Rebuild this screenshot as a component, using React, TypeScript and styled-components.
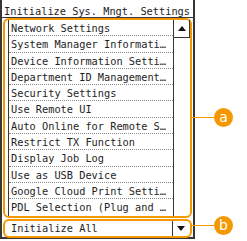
import { FC } from 'react';
import styled, { createGlobalStyle } from 'styled-components';

const ORANGE = '#f39800';
const DARK = '#363636';

const GlobalStyle = createGlobalStyle`
    html, body {
        margin: 0;
        padding: 0;
        background: #ffffff;
    }
`;

const Page = styled.div`
    position: relative;
    width: 247px;
    height: 241px;
    background: #ffffff;
    font-family: 'DejaVu Sans Mono', 'Liberation Mono', monospace;
    font-size: 10.3px;
    color: #1e1e1e;
`;

const Screen = styled.div`
    box-sizing: border-box;
    width: 195px;
    height: 239px;
    border: 2px solid ${DARK};
    border-top: none;
    display: flex;
    flex-direction: column;
`;

const Title = styled.div`
    box-sizing: border-box;
    height: 18px;
    padding: 5px 0 0 2px;
    line-height: 12px;
    border-bottom: 1px solid ${DARK};
    white-space: nowrap;
`;

const ListPanel = styled.div`
    margin: 0 1px 0 1px;
    border: 2px solid ${ORANGE};
    border-radius: 6px;
    padding-left: 3px;
    display: flex;
`;

const Items = styled.ul`
    list-style: none;
    margin: 0;
    padding: 0;
    flex: 1;
    border-left: 1px solid ${DARK};
`;

const Item = styled.li<{ $last?: boolean }>`
    height: 16.3px;
    line-height: 16.3px;
    padding-left: 2px;
    white-space: nowrap;
    overflow: hidden;
    box-sizing: border-box;
    border-bottom: ${(p) => (p.$last ? 'none' : '1px dotted #8a8a8a')};
`;

const ScrollBar = styled.div`
    width: 16px;
    border-left: 1px solid ${DARK};
    display: flex;
    flex-direction: column;
`;

const ArrowButton = styled.div<{ $edge?: boolean }>`
    box-sizing: border-box;
    height: 18px;
    display: flex;
    align-items: center;
    justify-content: center;
    border-bottom: 1px solid ${DARK};
    border-right: 1px solid ${DARK};
`;

const Triangle = styled.span<{ $down?: boolean }>`
    width: 0;
    height: 0;
    border-left: 4.5px solid transparent;
    border-right: 4.5px solid transparent;
    ${(p) => (p.$down ? `border-top: 5px solid #111;` : `border-bottom: 5px solid #111;`)}
`;

const BottomRow = styled.div`
    margin: 1px 1px 0 1px;
    height: 19px;
    box-sizing: border-box;
    border: 2px solid ${ORANGE};
    border-radius: 6px;
    display: flex;
`;

const BottomLabel = styled.div`
    flex: 1;
    padding-left: 6px;
    line-height: 15px;
    white-space: nowrap;
`;

const DownButton = styled.div`
    width: 15px;
    border-left: 1px solid ${DARK};
    margin-right: 2px;
    display: flex;
    align-items: center;
    justify-content: center;
`;

const Callout = styled.div<{ $top: number }>`
    position: absolute;
    left: 192px;
    top: ${(p) => p.$top}px;
    display: flex;
    align-items: center;
`;

const Leader = styled.span`
    width: 22px;
    height: 1px;
    background: ${ORANGE};
`;

const Badge = styled.span`
    width: 19px;
    height: 19px;
    border-radius: 50%;
    background: ${ORANGE};
    color: #ffffff;
    font-family: 'DejaVu Sans', 'Noto Sans', sans-serif;
    font-size: 14px;
    line-height: 18px;
    text-align: center;
`;

const items = [
    'Network Settings',
    'System Manager Informati…',
    'Device Information Setti…',
    'Department ID Management…',
    'Security Settings',
    'Use Remote UI',
    'Auto Online for Remote S…',
    'Restrict TX Function',
    'Display Job Log',
    'Use as USB Device',
    'Google Cloud Print Setti…',
    'PDL Selection (Plug and …',
];

const App: FC = () => {
    return (
        <Page>
            <GlobalStyle />
            <Screen>
                <Title>Initialize Sys. Mngt. Settings</Title>
                <ListPanel>
                    <Items>
                        {items.map((label, i) => (
                            <Item key={label} $last={i === items.length - 1}>
                                {label}
                            </Item>
                        ))}
                    </Items>
                    <ScrollBar>
                        <ArrowButton>
                            <Triangle />
                        </ArrowButton>
                    </ScrollBar>
                </ListPanel>
                <BottomRow>
                    <BottomLabel>Initialize All</BottomLabel>
                    <DownButton>
                        <Triangle $down />
                    </DownButton>
                </BottomRow>
            </Screen>
            <Callout $top={108}>
                <Leader />
                <Badge>a</Badge>
            </Callout>
            <Callout $top={216}>
                <Leader />
                <Badge>b</Badge>
            </Callout>
        </Page>
    );
};

export default App;
